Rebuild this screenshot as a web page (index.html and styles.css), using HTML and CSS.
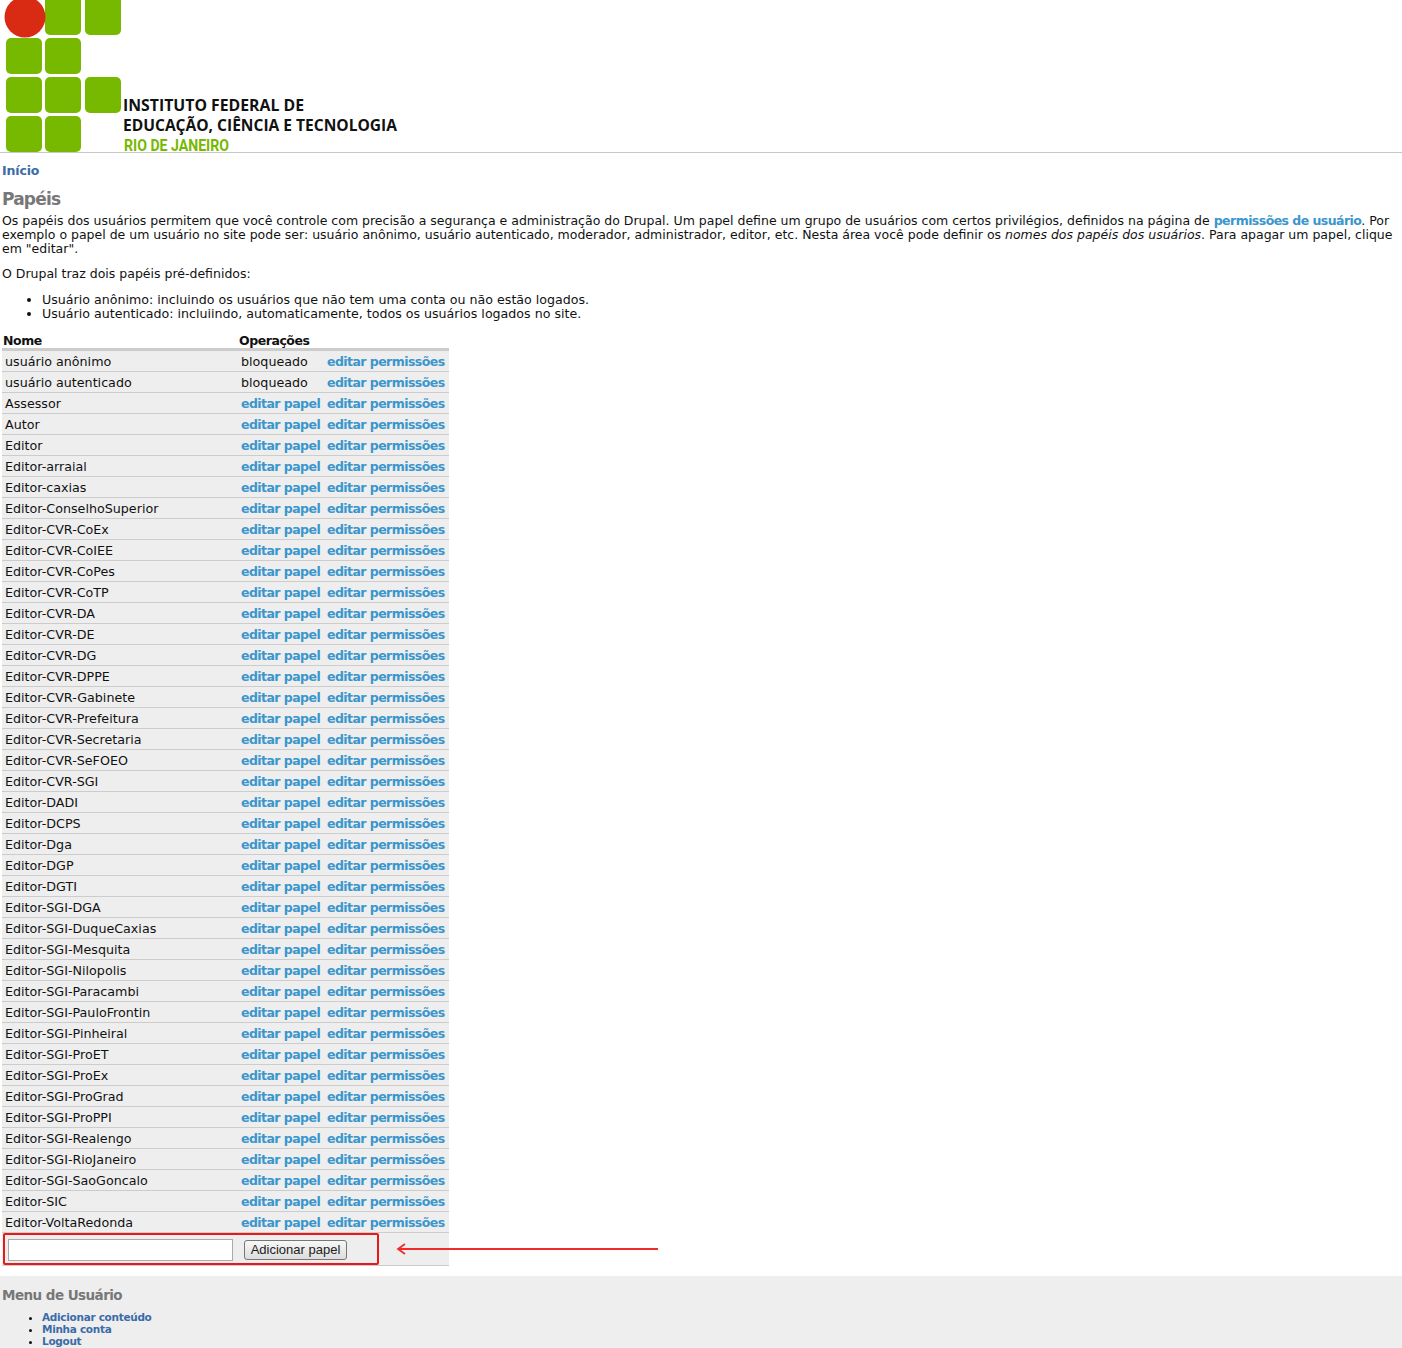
FILE: index.html
```html
<!DOCTYPE html>
<html lang="pt">
<head>
<meta charset="utf-8">
<title>Papéis</title>
<link rel="stylesheet" href="styles.css">
</head>
<body>
<header class="site-header">
<svg class="logo" width="420" height="152" viewBox="0 0 420 152" xmlns="http://www.w3.org/2000/svg">
<g fill="#77b800">
<rect x="45" y="-4" width="36" height="39" rx="5"/>
<rect x="85" y="-4" width="36" height="39" rx="5"/>
<rect x="6" y="38" width="36" height="36" rx="5"/>
<rect x="45" y="38" width="36" height="36" rx="5"/>
<rect x="6" y="77" width="36" height="36" rx="5"/>
<rect x="45" y="77" width="36" height="36" rx="5"/>
<rect x="85" y="77" width="36" height="36" rx="5"/>
<rect x="6" y="116" width="36" height="36" rx="5"/>
<rect x="45" y="116" width="36" height="36" rx="5"/>
</g>
<circle cx="25" cy="17" r="20.500" fill="#d92b14"/>
<text class="logo-name" x="123" y="111" textLength="181" lengthAdjust="spacingAndGlyphs">INSTITUTO FEDERAL DE</text>
<text class="logo-name" x="123" y="131" textLength="274" lengthAdjust="spacingAndGlyphs">EDUCAÇÃO, CIÊNCIA E TECNOLOGIA</text>
<text class="logo-campus" x="124" y="151" textLength="105" lengthAdjust="spacingAndGlyphs">RIO DE JANEIRO</text>
</svg>
</header>
<main class="content">
<nav class="breadcrumb"><a href="#">Início</a></nav>
<h1 class="title">Papéis</h1>
<p class="intro">Os papéis dos usuários permitem que você controle com precisão a segurança e administração do Drupal. Um papel define um grupo de usuários com certos privilégios, definidos na página de <a class="link" href="#">permissões de usuário</a>. Por exemplo o papel de um usuário no site pode ser: usuário anônimo, usuário autenticado, moderador, administrador, editor, etc. Nesta área você pode definir os <em>nomes dos papéis dos usuários</em>. Para apagar um papel, clique em "editar".</p>
<p class="intro">O Drupal traz dois papéis pré-definidos:</p>
<ul class="roles-info">
<li>Usuário anônimo: incluindo os usuários que não tem uma conta ou não estão logados.</li>
<li>Usuário autenticado: incluiindo, automaticamente, todos os usuários logados no site.</li>
</ul>
<div class="table-wrap">
<table class="roles">
<colgroup><col class="col-name"><col class="col-op"><col class="col-perm"></colgroup>
<thead><tr><th>Nome</th><th colspan="2">Operações</th></tr></thead>
<tbody>
<tr><td>usuário anônimo</td><td>bloqueado</td><td><a class="link" href="#">editar permissões</a></td></tr>
<tr><td>usuário autenticado</td><td>bloqueado</td><td><a class="link" href="#">editar permissões</a></td></tr>
<tr><td>Assessor</td><td><a class="link" href="#">editar papel</a></td><td><a class="link" href="#">editar permissões</a></td></tr>
<tr><td>Autor</td><td><a class="link" href="#">editar papel</a></td><td><a class="link" href="#">editar permissões</a></td></tr>
<tr><td>Editor</td><td><a class="link" href="#">editar papel</a></td><td><a class="link" href="#">editar permissões</a></td></tr>
<tr><td>Editor-arraial</td><td><a class="link" href="#">editar papel</a></td><td><a class="link" href="#">editar permissões</a></td></tr>
<tr><td>Editor-caxias</td><td><a class="link" href="#">editar papel</a></td><td><a class="link" href="#">editar permissões</a></td></tr>
<tr><td>Editor-ConselhoSuperior</td><td><a class="link" href="#">editar papel</a></td><td><a class="link" href="#">editar permissões</a></td></tr>
<tr><td>Editor-CVR-CoEx</td><td><a class="link" href="#">editar papel</a></td><td><a class="link" href="#">editar permissões</a></td></tr>
<tr><td>Editor-CVR-CoIEE</td><td><a class="link" href="#">editar papel</a></td><td><a class="link" href="#">editar permissões</a></td></tr>
<tr><td>Editor-CVR-CoPes</td><td><a class="link" href="#">editar papel</a></td><td><a class="link" href="#">editar permissões</a></td></tr>
<tr><td>Editor-CVR-CoTP</td><td><a class="link" href="#">editar papel</a></td><td><a class="link" href="#">editar permissões</a></td></tr>
<tr><td>Editor-CVR-DA</td><td><a class="link" href="#">editar papel</a></td><td><a class="link" href="#">editar permissões</a></td></tr>
<tr><td>Editor-CVR-DE</td><td><a class="link" href="#">editar papel</a></td><td><a class="link" href="#">editar permissões</a></td></tr>
<tr><td>Editor-CVR-DG</td><td><a class="link" href="#">editar papel</a></td><td><a class="link" href="#">editar permissões</a></td></tr>
<tr><td>Editor-CVR-DPPE</td><td><a class="link" href="#">editar papel</a></td><td><a class="link" href="#">editar permissões</a></td></tr>
<tr><td>Editor-CVR-Gabinete</td><td><a class="link" href="#">editar papel</a></td><td><a class="link" href="#">editar permissões</a></td></tr>
<tr><td>Editor-CVR-Prefeitura</td><td><a class="link" href="#">editar papel</a></td><td><a class="link" href="#">editar permissões</a></td></tr>
<tr><td>Editor-CVR-Secretaria</td><td><a class="link" href="#">editar papel</a></td><td><a class="link" href="#">editar permissões</a></td></tr>
<tr><td>Editor-CVR-SeFOEO</td><td><a class="link" href="#">editar papel</a></td><td><a class="link" href="#">editar permissões</a></td></tr>
<tr><td>Editor-CVR-SGI</td><td><a class="link" href="#">editar papel</a></td><td><a class="link" href="#">editar permissões</a></td></tr>
<tr><td>Editor-DADI</td><td><a class="link" href="#">editar papel</a></td><td><a class="link" href="#">editar permissões</a></td></tr>
<tr><td>Editor-DCPS</td><td><a class="link" href="#">editar papel</a></td><td><a class="link" href="#">editar permissões</a></td></tr>
<tr><td>Editor-Dga</td><td><a class="link" href="#">editar papel</a></td><td><a class="link" href="#">editar permissões</a></td></tr>
<tr><td>Editor-DGP</td><td><a class="link" href="#">editar papel</a></td><td><a class="link" href="#">editar permissões</a></td></tr>
<tr><td>Editor-DGTI</td><td><a class="link" href="#">editar papel</a></td><td><a class="link" href="#">editar permissões</a></td></tr>
<tr><td>Editor-SGI-DGA</td><td><a class="link" href="#">editar papel</a></td><td><a class="link" href="#">editar permissões</a></td></tr>
<tr><td>Editor-SGI-DuqueCaxias</td><td><a class="link" href="#">editar papel</a></td><td><a class="link" href="#">editar permissões</a></td></tr>
<tr><td>Editor-SGI-Mesquita</td><td><a class="link" href="#">editar papel</a></td><td><a class="link" href="#">editar permissões</a></td></tr>
<tr><td>Editor-SGI-Nilopolis</td><td><a class="link" href="#">editar papel</a></td><td><a class="link" href="#">editar permissões</a></td></tr>
<tr><td>Editor-SGI-Paracambi</td><td><a class="link" href="#">editar papel</a></td><td><a class="link" href="#">editar permissões</a></td></tr>
<tr><td>Editor-SGI-PauloFrontin</td><td><a class="link" href="#">editar papel</a></td><td><a class="link" href="#">editar permissões</a></td></tr>
<tr><td>Editor-SGI-Pinheiral</td><td><a class="link" href="#">editar papel</a></td><td><a class="link" href="#">editar permissões</a></td></tr>
<tr><td>Editor-SGI-ProET</td><td><a class="link" href="#">editar papel</a></td><td><a class="link" href="#">editar permissões</a></td></tr>
<tr><td>Editor-SGI-ProEx</td><td><a class="link" href="#">editar papel</a></td><td><a class="link" href="#">editar permissões</a></td></tr>
<tr><td>Editor-SGI-ProGrad</td><td><a class="link" href="#">editar papel</a></td><td><a class="link" href="#">editar permissões</a></td></tr>
<tr><td>Editor-SGI-ProPPI</td><td><a class="link" href="#">editar papel</a></td><td><a class="link" href="#">editar permissões</a></td></tr>
<tr><td>Editor-SGI-Realengo</td><td><a class="link" href="#">editar papel</a></td><td><a class="link" href="#">editar permissões</a></td></tr>
<tr><td>Editor-SGI-RioJaneiro</td><td><a class="link" href="#">editar papel</a></td><td><a class="link" href="#">editar permissões</a></td></tr>
<tr><td>Editor-SGI-SaoGoncalo</td><td><a class="link" href="#">editar papel</a></td><td><a class="link" href="#">editar permissões</a></td></tr>
<tr><td>Editor-SIC</td><td><a class="link" href="#">editar papel</a></td><td><a class="link" href="#">editar permissões</a></td></tr>
<tr><td>Editor-VoltaRedonda</td><td><a class="link" href="#">editar papel</a></td><td><a class="link" href="#">editar permissões</a></td></tr>
<tr class="add-row"><td colspan="3"><div class="add-form"><input class="add-input" type="text" aria-label="Nome do papel"><button class="add-button" type="button">Adicionar papel</button></div></td></tr>
</tbody>
</table>
<div class="highlight-box"></div>
<svg class="arrow" width="266" height="16" viewBox="0 0 266 16" xmlns="http://www.w3.org/2000/svg"><path d="M263 8H3M10 3L3 8L10 13" fill="none" stroke="#f22a2a" stroke-width="1.800"/></svg>
</div>
</main>
<footer class="user-menu">
<h2 class="menu-title">Menu de Usuário</h2>
<ul class="menu-list">
<li><a href="#">Adicionar conteúdo</a></li>
<li><a href="#">Minha conta</a></li>
<li><a href="#">Logout</a></li>
</ul>
</footer>
</body>
</html>
```
FILE: styles.css
```css
html, body { margin: 0; padding: 0; }
body {
  background: #fff;
  color: #111;
  font-family: "DejaVu Sans", Verdana, sans-serif;
  font-size: 12.500px;
  line-height: 14px;
}
a { text-decoration: none; }
.site-header {
  height: 152px;
  border-bottom: 1px solid #c8c8c8;
}
.logo { display: block; overflow: visible; }
.logo-name {
  font-family: "Open Sans", sans-serif;
  font-weight: 700;
  font-size: 16px;
  fill: #111;
}
.logo-campus {
  font-family: "Roboto", sans-serif;
  font-weight: 700;
  font-size: 16px;
  fill: #77b800;
}
.content { padding: 0 2px; }
.breadcrumb { padding-top: 11px; font-weight: 700; letter-spacing: -0.150px; }
.breadcrumb a { color: #3a6ca8; }
.title {
  margin: 6px 0 0;
  padding-top: 5px;
  font-size: 17px;
  line-height: 20px;
  font-weight: 700;
  letter-spacing: -0.800px;
  color: #777;
}
.intro { margin: 5px 0 11px; }
.link { color: #3a96cc; font-weight: 700; letter-spacing: -0.550px; }
.roles-info { margin: 12px 0 13px; padding-left: 40px; font-size: 12.640px; }
.table-wrap { position: relative; }
.roles {
  border-collapse: collapse;
  width: 447px;
  table-layout: fixed;
  font-size: 12.700px;
}
.col-name { width: 236px; }
.col-op { width: 86px; }
.col-perm { width: 125px; }
.roles th {
  padding: 0 1px;
  height: 14px;
  text-align: left;
  border-bottom: 3px solid #ccc;
  font-weight: 700;
  font-size: 12.500px;
  letter-spacing: -0.450px;
}
.roles td {
  height: 19px;
  padding: 1px 3px 0;
  background: #eee;
  border-bottom: 1px solid #ccc;
  white-space: nowrap;
}
.roles td .link { font-size: 12.500px; }
.add-row td { height: 31px; }
.add-form { display: flex; align-items: center; padding-left: 3px; gap: 11px; }
.add-input {
  box-sizing: border-box;
  width: 225px;
  height: 22px;
  margin: 0;
  border: 1px solid #aaa;
  background: #fff;
}
.add-button {
  box-sizing: border-box;
  width: 103px;
  height: 20px;
  padding: 0;
  border: 1px solid #777;
  border-radius: 3px;
  background: linear-gradient(#f7f7f7, #ddd);
  font-family: "Liberation Sans", Arial, sans-serif;
  font-size: 13px;
  color: #222;
}
.highlight-box {
  position: absolute;
  left: 1px;
  bottom: 1px;
  width: 376px;
  height: 32px;
  box-sizing: border-box;
  border: 2px solid #e61a1a;
  border-radius: 2px;
}
.arrow { position: absolute; left: 393px; bottom: 9px; }
.user-menu {
  margin-top: 10px;
  height: 72px;
  padding: 11px 2px 0;
  box-sizing: border-box;
  background: #eee;
  overflow: hidden;
}
.menu-title {
  margin: 0;
  font-size: 13.500px;
  line-height: 16px;
  font-weight: 700;
  letter-spacing: -0.550px;
  color: #777;
}
.menu-list {
  margin: 8px 0 0;
  padding-left: 40px;
  font-size: 10.500px;
  line-height: 12px;
  font-weight: 700;
  letter-spacing: -0.300px;
}
.menu-list a { color: #3a6ca8; }
```
